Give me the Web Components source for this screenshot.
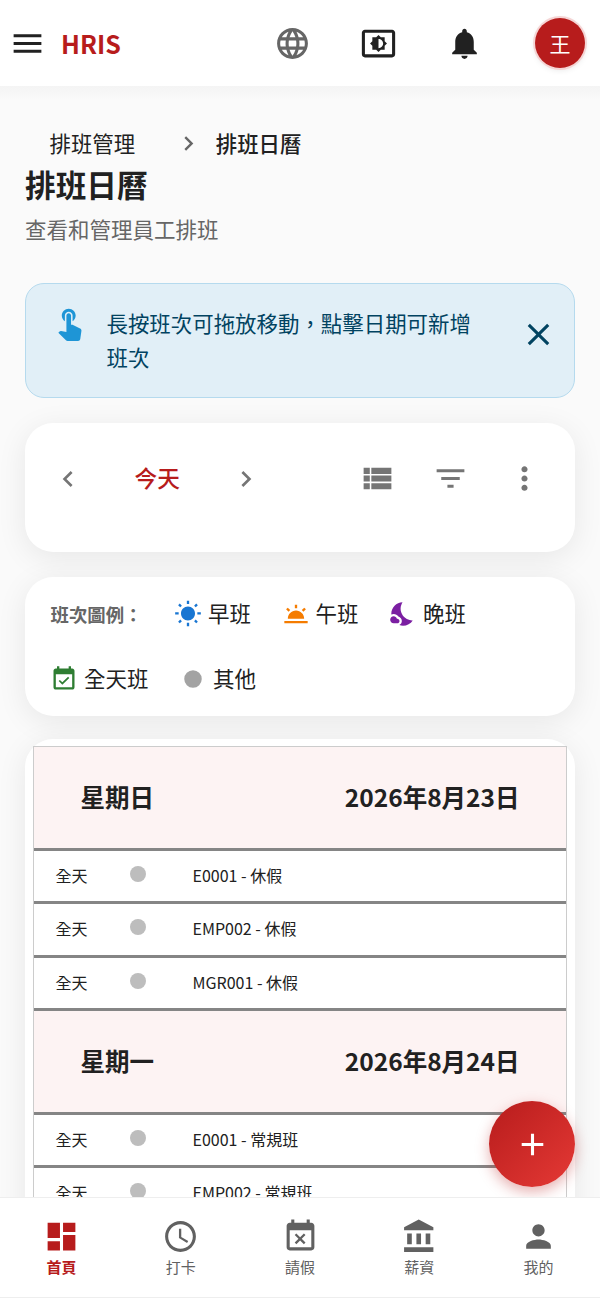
<!DOCTYPE html>
<html lang="zh-Hant"><head><meta charset="utf-8"><title>排班日曆</title>
<style>
html,body{margin:0;padding:0;background:#fafafa}
body{font-family:"Noto Sans CJK TC","Noto Sans",sans-serif;color:#212121}
</style></head><body>
<hr-app>
  <app-bar slot="top"></app-bar>
  <page-head></page-head>
  <info-alert>長按班次可拖放移動，點擊日期可新增班次</info-alert>
  <cal-toolbar></cal-toolbar>
  <shift-legend></shift-legend>
  <cal-card>
    <day-group day="星期日" date="2026年8月23日">
      <shift-row who="E0001 - 休假"></shift-row>
      <shift-row who="EMP002 - 休假"></shift-row>
      <shift-row who="MGR001 - 休假"></shift-row>
    </day-group>
    <day-group day="星期一" date="2026年8月24日">
      <shift-row who="E0001 - 常規班"></shift-row>
      <shift-row who="EMP002 - 常規班"></shift-row>
    </day-group>
  </cal-card>
  <fab-button slot="over"></fab-button>
  <bottom-nav slot="bottom">
    <nav-item icon="dashboard" active>首頁</nav-item>
    <nav-item icon="clock">打卡</nav-item>
    <nav-item icon="busy">請假</nav-item>
    <nav-item icon="bank">薪資</nav-item>
    <nav-item icon="person">我的</nav-item>
  </bottom-nav>
</hr-app>
<script>
const P={
menu:'M3 18h18v-2H3v2zm0-5h18v-2H3v2zm0-7v2h18V6H3z',
language:'M11.99 2C6.47 2 2 6.48 2 12s4.47 10 9.99 10C17.52 22 22 17.52 22 12S17.52 2 11.99 2zm6.93 6h-2.95c-.32-1.25-.78-2.45-1.38-3.56 1.84.63 3.37 1.91 4.33 3.56zM12 4.04c.83 1.2 1.48 2.53 1.91 3.96h-3.82c.43-1.43 1.08-2.76 1.91-3.96zM4.26 14C4.1 13.36 4 12.69 4 12s.1-1.36.26-2h3.38c-.08.66-.14 1.32-.14 2 0 .68.06 1.34.14 2H4.26zm.82 2h2.95c.32 1.25.78 2.45 1.38 3.56-1.84-.63-3.37-1.9-4.33-3.56zm2.95-8H5.08c.96-1.66 2.49-2.93 4.33-3.56C8.81 5.55 8.35 6.75 8.03 8zM12 19.96c-.83-1.2-1.48-2.53-1.91-3.96h3.82c-.43 1.43-1.08 2.76-1.91 3.96zM14.34 14H9.66c-.09-.66-.16-1.32-.16-2 0-.68.07-1.35.16-2h4.68c.09.65.16 1.32.16 2 0 .68-.07 1.34-.16 2zm.25 5.56c.6-1.11 1.06-2.31 1.38-3.56h2.95c-.96 1.65-2.49 2.93-4.33 3.56zM16.36 14c.08-.66.14-1.32.14-2 0-.68-.06-1.34-.14-2h3.38c.16.64.26 1.31.26 2s-.1 1.36-.26 2h-3.38z',
brightness:'M20.8 3H3.2c-1.11 0-2 .89-2 2v14c0 1.11.89 2 2 2h17.6c1.11 0 2-.89 2-2V5c0-1.11-.89-2-2-2zm0 16.02H3.2V4.98h17.6v14.04zM8 16h2.5l1.5 1.5 1.5-1.5H16v-2.5l1.5-1.5-1.5-1.5V8h-2.5L12 6.5 10.5 8H8v2.5L6.5 12 8 13.5V16zm4-7c1.66 0 3 1.34 3 3s-1.34 3-3 3V9z',
bell:'M12 22c1.1 0 2-.9 2-2h-4c0 1.1.89 2 2 2zm6-6v-5c0-3.07-1.64-5.64-4.5-6.32V4c0-.83-.67-1.5-1.5-1.5s-1.5.67-1.5 1.5v.68C7.63 5.36 6 7.92 6 11v5l-2 2v1h16v-1l-2-2z',
touch:'M9 11.24V7.5C9 6.12 10.12 5 11.5 5S14 6.12 14 7.5v3.74c1.21-.81 2-2.18 2-3.74C16 5.01 13.99 3 11.5 3S7 5.01 7 7.5c0 1.56.79 2.93 2 3.74zm9.84 4.63l-4.54-2.26c-.17-.07-.35-.11-.54-.11H13v-6c0-.83-.67-1.5-1.5-1.5S10 6.67 10 7.5v10.74l-3.43-.72c-.08-.01-.15-.03-.24-.03-.31 0-.59.13-.79.33l-.79.8 4.94 4.94c.27.27.65.44 1.06.44h6.79c.75 0 1.33-.55 1.44-1.28l.75-5.27c.01-.07.02-.14.02-.2 0-.62-.38-1.16-.91-1.38z',
close:'M19 6.41 17.59 5 12 10.59 6.41 5 5 6.41 10.59 12 5 17.59 6.41 19 12 13.41 17.59 19 19 17.59 13.41 12z',
left:'M15.41 7.41 14 6l-6 6 6 6 1.41-1.41L10.83 12z',
right:'M10 6 8.59 7.41 13.17 12l-4.58 4.59L10 18l6-6z',
list:'M3 14h4v-4H3v4zm0 5h4v-4H3v4zM3 9h4V5H3v4zm5 5h13v-4H8v4zm0 5h13v-4H8v4zM8 5v4h13V5H8z',
filter:'M10 18h4v-2h-4v2zM3 6v2h18V6H3zm3 7h12v-2H6v2z',
more:'M12 8c1.1 0 2-.9 2-2s-.9-2-2-2-2 .9-2 2 .9 2 2 2zm0 2c-1.1 0-2 .9-2 2s.9 2 2 2 2-.9 2-2-.9-2-2-2zm0 6c-1.1 0-2 .9-2 2s.9 2 2 2 2-.9 2-2-.9-2-2-2z',
sun:'M6.76 4.84l-1.8-1.79-1.41 1.41 1.79 1.79 1.42-1.41zM4 10.5H1v2h3v-2zm9-9.95h-2V3.5h2V.55zm7.45 3.91l-1.41-1.41-1.79 1.79 1.41 1.41 1.79-1.79zm-3.21 13.7l1.79 1.8 1.41-1.41-1.8-1.79-1.4 1.4zM20 10.5v2h3v-2h-3zm-8-5c-3.31 0-6 2.69-6 6s2.69 6 6 6 6-2.69 6-6-2.69-6-6-6zm-1 16.95h2V19.5h-2v2.95zm-7.45-3.91l1.41 1.41 1.79-1.8-1.41-1.41-1.79 1.8z',
twilight:'M16.955 8.662l2.12-2.122 1.414 1.414-2.121 2.122zM2 18h20v2H2zm9-14h2v3h-2zM3.512 7.955l1.414-1.414 2.122 2.12L5.634 10.076zM5 16h14c0-3.87-3.13-7-7-7s-7 3.13-7 7z',
moon:'M11.1 12.08c-2.33-4.51-.5-8.48.53-10.07C6.27 2.2 1.98 6.59 1.98 12c0 .14.02.28.02.42.62-.27 1.29-.42 2-.42 1.66 0 3.18.83 4.1 2.15 1.67.48 2.9 2.02 2.9 3.85 0 1.52-.87 2.83-2.12 3.51.98.32 2.03.5 3.11.5 3.5 0 6.58-1.8 8.37-4.52-2.36.23-6.98-.97-9.26-5.41zM7 16h-.18C6.4 14.84 5.3 14 4 14c-1.66 0-3 1.34-3 3s1.34 3 3 3h3c1.1 0 2-.9 2-2s-.9-2-2-2z',
event:'M16.53 11.06L15.47 10l-4.88 4.88-2.12-2.12-1.06 1.06L10.59 17l5.94-5.94zM19 3h-1V1h-2v2H8V1H6v2H5c-1.11 0-1.99.9-1.99 2L3 19c0 1.1.89 2 2 2h14c1.1 0 2-.9 2-2V5c0-1.1-.9-2-2-2zm0 16H5V8h14v11z',
circle:'M12 4.5a7.5 7.5 0 1 0 0 15 7.5 7.5 0 0 0 0-15z',
dashboard:'M3 13h8V3H3v10zm0 8h8v-6H3v6zm10 0h8V11h-8v10zm0-18v6h8V3h-8z',
clock:'M11.99 2C6.47 2 2 6.48 2 12s4.47 10 9.99 10C17.52 22 22 17.52 22 12S17.52 2 11.99 2zM12 20c-4.42 0-8-3.58-8-8s3.58-8 8-8 8 3.58 8 8-3.58 8-8 8zm.5-13H11v6l5.25 3.15.75-1.23-4.5-2.67z',
busy:'M9.31 17l2.44-2.44L14.19 17l1.06-1.06-2.44-2.44 2.44-2.44L14.19 10l-2.44 2.44L9.31 10l-1.06 1.06 2.44 2.44-2.44 2.44L9.31 17zM19 3h-1V1h-2v2H8V1H6v2H5c-1.11 0-1.99.9-1.99 2L3 19c0 1.1.89 2 2 2h14c1.1 0 2-.9 2-2V5c0-1.1-.9-2-2-2zm0 16H5V8h14v11z',
bank:'M4 10v7h3v-7H4zm6 0v7h3v-7h-3zM2 22h19v-3H2v3zm14-12v7h3v-7h-3zm-4.5-9L2 6v2h19V6l-9.5-5z',
person:'M12 12c2.21 0 4-1.79 4-4s-1.79-4-4-4-4 1.79-4 4 1.79 4 4 4zm0 2c-2.67 0-8 1.34-8 4v2h16v-2c0-2.66-5.33-4-8-4z',
add:'M19 13h-6v6h-2v-6H5v-2h6V5h2v6h6v2z'
};
const FONT='"Noto Sans CJK TC","Noto Sans",sans-serif';
const SHADOW='0 6px 30px rgba(0,0,0,.08)';
function def(name,css,html){
  customElements.define(name,class extends HTMLElement{
    constructor(){super();this.attachShadow({mode:'open'});}
    connectedCallback(){
      const h=typeof html==='function'?html(this):html;
      this.shadowRoot.innerHTML='<style>'+css+'</style>'+h;
    }
  });
}
def('m-icon',':host{display:inline-flex;flex:none;width:var(--s,37px);height:var(--s,37px);color:inherit}svg{width:100%;height:100%;display:block;fill:currentColor}',
  e=>'<svg viewBox="0 0 24 24" aria-hidden="true"><path d="'+P[e.getAttribute('n')]+'"/></svg>');
def('hr-app',`:host{display:flex;flex-direction:column;height:1298px;width:600px;overflow:hidden;position:relative;background:#fafafa;font-family:${FONT}}
 main{flex:1;min-height:0;overflow:hidden;padding:0 25px;display:flex;flex-direction:column;background:linear-gradient(#f4f4f4,#fafafa 14px)}
 ::slotted(fab-button){position:absolute;right:25px;bottom:111px}`,
 '<slot name="top"></slot><main><slot></slot></main><slot name="over"></slot><slot name="bottom"></slot>');
def('app-bar',`:host{display:flex;flex:none;align-items:center;height:86px;background:#fff;position:relative;color:#212121}
 .menu{margin-left:9px}
 .brand{font-size:25px;font-weight:700;color:#b71c1c;margin-left:15px;line-height:1}
 .sp{flex:1}
 .lang{color:#666;margin-right:48.8px}
 .br{margin-right:49.2px}
 .bell{margin-right:52px}
 .av{width:50px;height:50px;border-radius:50%;background:#b71c1c;color:#fff;display:flex;align-items:center;justify-content:center;font-size:21px;margin-right:15px;box-shadow:0 0 0 2px #f5d5d5,0 2px 6px rgba(0,0,0,.1)}`,
 `<m-icon class="menu" n="menu"></m-icon><span class="brand">HRIS</span><span class="sp"></span>
  <m-icon class="lang" n="language"></m-icon><m-icon class="br" n="brightness"></m-icon><m-icon class="bell" n="bell"></m-icon><div class="av">王</div>`);
def('page-head',`:host{display:block;flex:none;padding-top:41px}
 .c{display:flex;align-items:center;height:32px;font-size:21.4px;line-height:32px;color:#212121;padding-left:24.5px}
 .c b{font-weight:500}
 .c m-icon{--s:29px;color:#666;margin:2px 13px 2px 38.7px}
 h1{margin:4px 0 0;font-size:30.67px;line-height:42px;font-weight:700;color:#212121}
 p{margin:8px 0 0;font-size:21.5px;line-height:32px;color:#666}`,
 `<div class="c"><span>排班管理</span><m-icon n="right"></m-icon><b>排班日曆</b></div><h1>排班日曆</h1><p>查看和管理員工排班</p>`);
def('info-alert',`:host{display:flex;flex:none;align-items:center;box-sizing:border-box;height:115px;margin-top:38px;background:#e1eff7;border:1.5px solid #b5daee;border-radius:19px;color:#014361}
 .i{--s:37px;color:#1e95d6;margin:20px 18.5px 0 25px;align-self:flex-start}
 .t{flex:none;width:380px;font-size:21.45px;line-height:34px;margin-top:-2px}
 .x{--s:37px;margin:0 0 13px 33.5px}`,
 `<m-icon class="i" n="touch"></m-icon><div class="t"><slot></slot></div><m-icon class="x" n="close"></m-icon>`);
def('cal-toolbar',`:host{display:flex;flex:none;box-sizing:border-box;height:129px;margin-top:25px;padding:19px 13px 0 6px;background:#fff;border-radius:28px;box-shadow:${SHADOW};align-items:flex-start;color:#757575}
 .b{width:74.67px;height:74.67px;display:flex;align-items:center;justify-content:center}
 .b m-icon{--s:32px}
 .b.r m-icon{--s:37px;margin-top:-2px}
 .t{width:103px;height:70.67px;display:flex;align-items:center;justify-content:center;font-size:22.67px;font-weight:500;color:#b71c1c}
 .sp{flex:1}
 .m1{margin-right:-2px}`,
 `<div class="b"><m-icon n="left"></m-icon></div><div class="t">今天</div><div class="b"><m-icon n="right"></m-icon></div><span class="sp"></span>
 <div class="b r m1"><m-icon n="list"></m-icon></div><div class="b r"><m-icon n="filter"></m-icon></div><div class="b r"><m-icon n="more"></m-icon></div>`);
def('legend-item',`:host{display:inline-flex;align-items:center;gap:6px;height:38px;font-size:21.5px;color:#212121}m-icon{--s:28px}span{margin-top:-4px;display:block}`,
 e=>`<m-icon n="${e.getAttribute('n')}" style="color:${e.getAttribute('c')}"></m-icon><span><slot></slot></span>`);
def('shift-legend',`:host{display:flex;flex:none;flex-wrap:wrap;align-items:center;box-sizing:border-box;height:139px;margin-top:25px;padding:18px 20px 17px 25px;row-gap:27px;column-gap:30.5px;background:#fff;border-radius:28px;box-shadow:${SHADOW};align-content:flex-start}
 .l{font-size:18.4px;font-weight:700;color:#666;width:93px;margin:-1px 0 0 .5px;box-sizing:border-box;white-space:nowrap}`,
 `<span class="l">班次圖例：</span>
 <legend-item n="sun" c="#1976d2">早班</legend-item><legend-item n="twilight" c="#f57c00">午班</legend-item><legend-item n="moon" c="#7b1fa2">晚班</legend-item>
 <legend-item n="event" c="#2e7d32">全天班</legend-item><legend-item n="circle" c="#a3a3a3">其他</legend-item>`);
def('cal-card',`:host{display:block;flex:none;margin-top:23px;padding:7px 8px 0;background:#fff;border-radius:28px 28px 0 0;box-shadow:${SHADOW}}
 .w{border-left:1px solid #ccc;border-right:1px solid #ccc;border-top:1px solid #ccc}`,'<div class="w"><slot></slot></div>');
def('day-group',`:host{display:block}
 .h{display:flex;justify-content:space-between;align-items:center;box-sizing:border-box;height:103.5px;padding:0 46.5px 1px 46.5px;background:#fdf3f3;border-bottom:3px solid #858585;font-size:24.5px;font-weight:700;color:#212121}`,
 e=>`<div class="h"><span>${e.getAttribute('day')}</span><span>${e.getAttribute('date')}</span></div><slot></slot>`);
def('shift-row',`:host{display:flex;align-items:center;box-sizing:border-box;height:53.5px;padding-bottom:2px;border-bottom:3px solid #858585;background:#fff;font-size:16px;color:#212121}
 .a{padding-left:21.5px;width:74.5px}
 .d{width:16px;height:16px;border-radius:50%;background:#bdbdbd;margin:-2px 0 0 0}
 .n{margin-left:46.5px}`,
 e=>`<span class="a">全天</span><span class="d"></span><span class="n">${e.getAttribute('who')}</span>`);
def('fab-button',`:host{display:flex;align-items:center;justify-content:center;width:86px;height:86px;border-radius:50%;background:linear-gradient(135deg,#b71c1c,#e53935);color:#fff;box-shadow:0 5px 14px rgba(183,28,28,.35)}`,
 '<m-icon n="add"></m-icon>');
def('bottom-nav',`:host{display:flex;flex:none;box-sizing:border-box;height:101px;padding:0 2px;background:#fff;position:relative;border-top:1px solid #eee;border-bottom:1px solid #eee}`,'<slot></slot>');
def('nav-item',`:host{flex:1;display:flex;flex-direction:column;align-items:center;padding-top:20px;color:#616161;font-size:15px;line-height:22px;min-width:0}
 :host([active]){color:#b71c1c;font-weight:700}
 m-icon{margin-bottom:1px}`,
 e=>`<m-icon n="${e.getAttribute('icon')}"></m-icon><span><slot></slot></span>`);
</script>
</body></html>
